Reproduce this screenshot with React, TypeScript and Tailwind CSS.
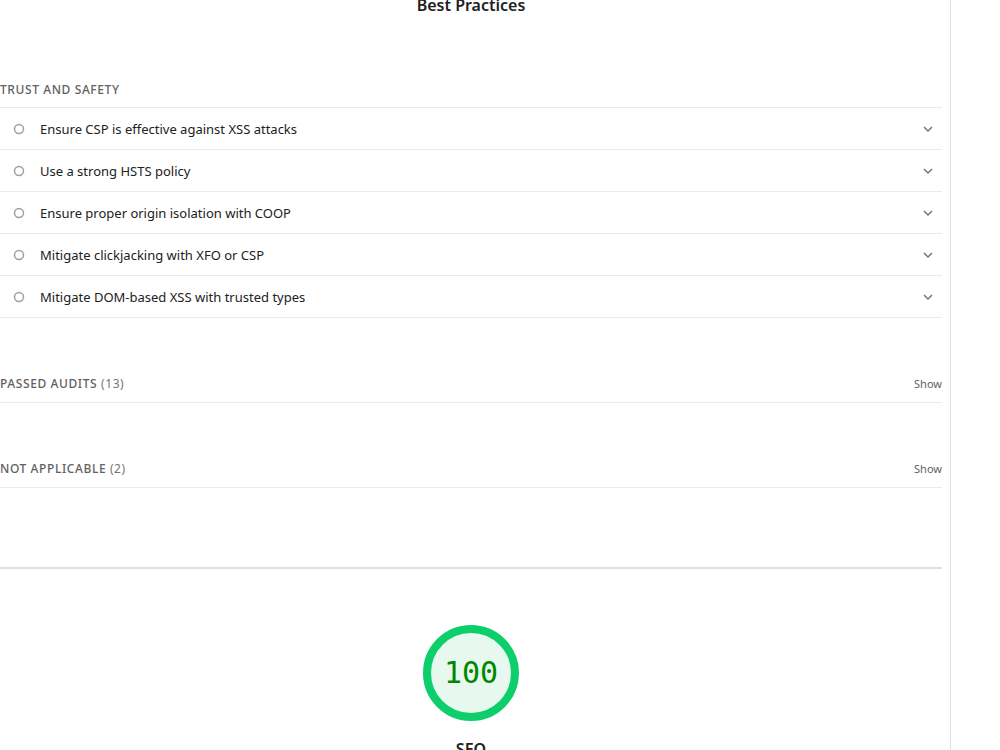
import React from "react";

const audits = [
  "Ensure CSP is effective against XSS attacks",
  "Use a strong HSTS policy",
  "Ensure proper origin isolation with COOP",
  "Mitigate clickjacking with XFO or CSP",
  "Mitigate DOM-based XSS with trusted types",
];

function Chevron() {
  return (
    <svg width="12" height="12" viewBox="0 0 12 12" fill="none">
      <path d="M2 4 L6 8 L10 4" stroke="#757575" strokeWidth="1.5" />
    </svg>
  );
}

function Circle() {
  return (
    <svg width="12" height="12" viewBox="0 0 12 12">
      <circle cx="6" cy="6" r="4.5" fill="none" stroke="#a0a0a0" strokeWidth="1.5" />
    </svg>
  );
}

export default function App() {
  return (
    <div
      className="w-[1000px] h-[750px] overflow-hidden bg-white flex text-[#212121]"
      style={{ fontFamily: '"Noto Sans", "Open Sans", sans-serif' }}
    >
      <div className="w-[951px] shrink-0 border-r border-[#e0e0e0] pr-[8px]">
        <div className="flex flex-col">
          <div className="mt-[-7px] h-[24px] flex items-center justify-center text-[16px] font-semibold leading-[24px]">
            Best Practices
          </div>
          <div className="mt-[65px] pb-[9px] text-[12px] font-medium uppercase tracking-[0.05em] text-[#616161] leading-[16px]">
            Trust and Safety
          </div>
          <div className="border-t border-[#ebebeb]">
            {audits.map((a) => (
              <div
                key={a}
                className="h-[42px] border-b border-[#ebebeb] flex items-center"
              >
                <div className="w-[40px] flex justify-start pl-[13px]">
                  <Circle />
                </div>
                <div className="flex-1 text-[13px] leading-[20px]">{a}</div>
                <div className="pr-[8px]">
                  <Chevron />
                </div>
              </div>
            ))}
          </div>
          <div className="mt-[57px] h-[18px] flex items-center justify-between text-[11px] leading-[16px]">
            <span className="text-[12px] font-medium uppercase tracking-[0.05em] text-[#616161]">
              Passed audits <span className="font-normal text-[#757575]">(13)</span>
            </span>
            <span className="text-[#616161]">Show</span>
          </div>
          <div className="mt-[9px] border-b border-[#ebebeb]" />
          <div className="mt-[57px] h-[18px] flex items-center justify-between text-[11px] leading-[16px]">
            <span className="text-[12px] font-medium uppercase tracking-[0.05em] text-[#616161]">
              Not applicable <span className="font-normal text-[#757575]">(2)</span>
            </span>
            <span className="text-[#616161]">Show</span>
          </div>
          <div className="mt-[9px] border-b border-[#ebebeb]" />
          <div className="mt-[79px] border-b-2 border-[#e0e0e0]" />
          <div className="mt-[56px] flex flex-col items-center">
            <div className="w-[96px] h-[96px] rounded-full border-[8px] border-[#0cce6b] bg-[#e7f9ee] flex items-center justify-center">
              <span
                className="text-[30px] text-[#008800] leading-none"
                style={{ fontFamily: '"DejaVu Sans Mono", monospace' }}
              >
                100
              </span>
            </div>
            <div className="mt-[16px] text-[16px] font-semibold leading-[24px]">SEO</div>
          </div>
        </div>
      </div>
      <div className="flex-1" />
    </div>
  );
}
